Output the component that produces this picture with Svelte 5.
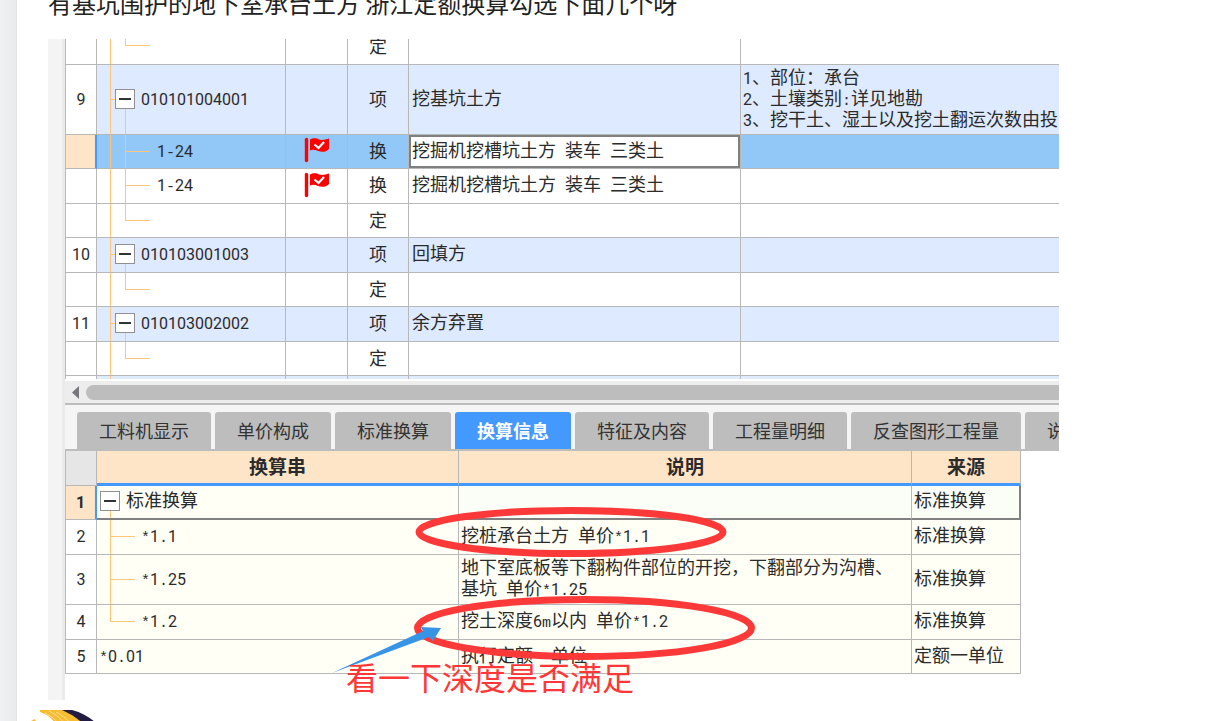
<script>
  const quotaRows = [
    { no: "", kind: "定", tree: "last" },
    {
      no: "9",
      code: "010101004001",
      kind: "项",
      name: "挖基坑土方",
      note: "1、部位：承台\n2、土壤类别:详见地勘\n3、挖干土、湿土以及挖土翻运次数由投",
      tree: "parent",
    },
    { no: "", code: "1-24", flag: true, kind: "换", name: "挖掘机挖槽坑土方 装车 三类土", tree: "child", selected: true },
    { no: "", code: "1-24", flag: true, kind: "换", name: "挖掘机挖槽坑土方 装车 三类土", tree: "child" },
    { no: "", kind: "定", tree: "last" },
    { no: "10", code: "010103001003", kind: "项", name: "回填方", tree: "parent" },
    { no: "", kind: "定", tree: "last" },
    { no: "11", code: "010103002002", kind: "项", name: "余方弃置", tree: "parent" },
    { no: "", kind: "定", tree: "last" },
    { no: "", kind: "", tree: "parent", cut: true },
  ];

  const tabs = ["工料机显示", "单价构成", "标准换算", "换算信息", "特征及内容", "工程量明细", "反查图形工程量", "说明信息"];
  let activeTab = $state("换算信息");

  const convertRows = [
    { no: "1", code: "标准换算", desc: "", source: "标准换算", tree: "parent", selected: true },
    { no: "2", code: "*1.1", desc: "挖桩承台土方 单价*1.1", source: "标准换算", tree: "child" },
    { no: "3", code: "*1.25", desc: "地下室底板等下翻构件部位的开挖，下翻部分为沟槽、\n基坑 单价*1.25", source: "标准换算", tree: "child" },
    { no: "4", code: "*1.2", desc: "挖土深度6m以内 单价*1.2", source: "标准换算", tree: "last" },
    { no: "5", code: "*0.01", desc: "执行定额一单位", source: "定额一单位", tree: "none" },
  ];

  // digits and other half-width characters get their own font
  const split = (text) => (text || "").match(/[0-9]+|[ -\/:-~]+|[^ -~]+/g) || [];
  const kindOf = (part) => (/^[0-9]/.test(part) ? "digit" : /^[ -~]/.test(part) ? "half" : "wide");
</script>

{#snippet grid(text)}{#each split(text) as part}<span class={kindOf(part)}>{part}</span>{/each}{/snippet}

{#snippet flagIcon()}
  <svg class="flag" width="26" height="26" viewBox="0 0 26 26" aria-hidden="true">
    <path d="M2.5 2.5V23.5" stroke="#f00" stroke-width="3.4" stroke-linecap="round" />
    <path d="M6 2.5C9 0.5 13 1 15 2.5C18 3.5 22 2.5 25 1.5V12C22 15 18 15.5 14 14C11 12.5 8 12.5 6 13.5Z" fill="#f00" />
    <path d="M10.5 7.5L14.5 11L20 5" fill="none" stroke="#fff" stroke-width="2.2" />
  </svg>
{/snippet}

<div class="page">
  <aside class="edge"></aside>
  <main>
    <h1>有基坑围护的地下室承台土方 浙江定额换算勾选下面几个呀</h1>

    <div class="shot">
      <div class="gutter"></div>
      <div class="panes">
        <div class="quota">
          <table>
            <colgroup>
              <col class="c-no" /><col class="c-code" /><col class="c-flag" /><col class="c-kind" /><col class="c-name" /><col />
            </colgroup>
            <tbody>
              {#each quotaRows as row}
                <tr class:item={row.tree === "parent"} class:selected={row.selected} class:tall={row.note}>
                  <td class="no">{@render grid(row.no)}</td>
                  <td class="code {row.tree}">
                    <i class="trunk"></i>
                    {#if !row.cut}
                      <i class="rail"></i><i class="twig"></i>
                    {/if}
                    {#if row.tree === "parent" && !row.cut}
                      <button class="fold" aria-label="折叠"></button>
                    {/if}
                    {@render grid(row.code)}
                  </td>
                  <td class="mid">{#if row.flag}{@render flagIcon()}{/if}</td>
                  <td class="mid">{row.kind}</td>
                  <td class="name">{@render grid(row.name)}</td>
                  <td class="note">{@render grid(row.note)}</td>
                </tr>
              {/each}
            </tbody>
          </table>
        </div>

        <div class="scroll">
          <button aria-label="向左滚动">
            <svg width="7" height="13" viewBox="0 0 7 13"><path d="M7 0V13L0 6.5Z" fill="#77777c" /></svg>
          </button>
          <div class="thumb"></div>
        </div>

        <div class="tabs" role="tablist">
          {#each tabs as tab}
            <button role="tab" aria-selected={activeTab === tab} class:active={activeTab === tab} onclick={() => (activeTab = tab)}>{tab}</button>
          {/each}
        </div>

        <table class="convert">
          <colgroup>
            <col class="c-no" /><col class="c-string" /><col class="c-desc" /><col class="c-source" />
          </colgroup>
          <thead>
            <tr><td class="corner"></td><th>换算串</th><th>说明</th><th>来源</th></tr>
          </thead>
          <tbody>
            {#each convertRows as row}
              <tr class:current={row.selected} class:double={row.desc.includes("\n")}>
                <td class="no">{@render grid(row.no)}</td>
                <td class="code {row.tree}">
                  {#if row.tree !== "none"}
                    <i class="rail"></i><i class="twig"></i>
                  {/if}
                  {#if row.tree === "parent"}
                    <button class="fold" aria-label="折叠"></button>
                  {/if}
                  {@render grid(row.code)}
                </td>
                <td class="desc">{@render grid(row.desc)}</td>
                <td class="desc">{@render grid(row.source)}</td>
              </tr>
            {/each}
          </tbody>
        </table>
      </div>

      <!-- hand-drawn marks over the tables -->
      <svg class="marks" width="1011" height="660" viewBox="48 39 1011 660" aria-hidden="true">
        <g fill="none" stroke="#fc3939" stroke-width="7">
          <ellipse cx="571" cy="532" rx="152" ry="21.5" />
          <ellipse cx="584.5" cy="628" rx="167" ry="28.5" />
        </g>
        <path d="M332 673L423 631L421 627L441 628L433 641L429 637Z" fill="#3895e6" />
      </svg>
      <p class="remark">看一下深度是否满足</p>
    </div>

    <svg class="avatar" width="80" height="80" viewBox="0 0 80 80" aria-hidden="true">
      <path d="M29 0H41C52 3 60 8 66 14L70 30H50Z" fill="#231c42" />
      <path d="M9 0H31C42 5 49 10 54 16H26C22 9 16 4 9 2Z" fill="#f8bd2e" />
      <path d="M0 11L4 9L7 16H-2Z" fill="#f8bd2e" />
      <path d="M18 1C25 5 31 9 35 16M25 2C32 6 38 10 41 16M14 3C21 7 26 10 28 16" fill="none" stroke="#fbe0a0" />
    </svg>
  </main>
</div>

<style>
  :global(body) {
    overflow: hidden;
    background: #fff;
  }

  .page {
    display: flex;
    height: 100vh;
    overflow: hidden;
    font-family: "Noto Sans CJK SC", sans-serif;
    color: #2b2b2b;
  }

  .edge {
    flex: 0 0 17px;
    box-sizing: border-box;
    border-right: 1px solid #e2e4e4;
    background: linear-gradient(to right, #eff1f3, #e9ebeb);
  }

  main {
    flex: 1;
    min-width: 0;
    padding-left: 31px;
    margin-top: -15px;
  }

  h1 {
    margin: 0 0 18px;
    font-size: 24px;
    font-weight: 400;
    line-height: 36px;
    white-space: nowrap;
    color: #222;
  }

  .shot {
    position: relative;
    display: flex;
    max-width: 1011px;
    overflow: hidden;
  }

  .gutter {
    flex: 0 0 17px;
    box-sizing: border-box;
    background: #f4f4f4;
    border-right: 3px solid #ebebeb;
  }

  .panes {
    flex: 1;
    min-width: 0;
    padding-bottom: 26px;
  }

  table {
    width: 100%;
    table-layout: fixed;
    border-spacing: 0;
    border-left: 1px solid #b8b8b8;
    font-size: 18px;
    line-height: 21px;
  }

  td,
  th {
    box-sizing: border-box;
    padding: 0 0 5px;
    height: 35px;
    border-right: 1px solid #b8b8b8;
    border-bottom: 1px solid #b8b8b8;
    white-space: pre;
    overflow: hidden;
  }

  .digit,
  .half {
    line-height: 0;
  }

  .digit {
    font-family: Roboto, sans-serif;
    font-size: 16px;
  }

  .half {
    font-family: "Liberation Mono", monospace;
    font-size: 15px;
  }

  .c-no { width: 31px; }
  .c-code { width: 189px; }
  .c-flag { width: 62px; }
  .c-kind { width: 61px; }
  .c-name { width: 332px; }
  .c-string { width: 362px; }
  .c-desc { width: 453px; }
  .c-source { width: 109px; }

  /* upper table */
  .quota {
    height: 340px;
    overflow: hidden;
  }

  .quota table {
    margin-top: -10px;
  }

  .quota tr:nth-child(odd) td {
    height: 34px;
  }

  .quota tr:first-child td {
    height: 36px;
  }

  .quota tr.tall td {
    height: 70px;
  }

  .item td {
    background: #deeaff;
  }

  .selected td {
    background: #92c8f7;
  }

  .item td.no {
    background: #fff;
  }

  .selected td.no,
  .current td.no {
    background: #ffe5c8;
    border-right: 2px solid #4499ff;
  }

  .selected td.name {
    background: #fff;
    box-shadow: inset 0 0 0 2px #808080;
  }

  .no,
  .mid {
    text-align: center;
  }

  .mid {
    padding-bottom: 3px;
  }

  .name,
  .note,
  .desc {
    padding-left: 3px;
  }

  .note {
    padding-left: 2px;
    border-right: 0;
  }

  .flag {
    display: block;
    margin: 0 auto;
  }

  /* tree column */
  .code {
    position: relative;
    padding-left: 44px;
    white-space: nowrap;
  }

  .quota .child {
    padding-left: 60px;
  }

  .code i {
    position: absolute;
    background: #ffc67a;
  }

  .code .trunk {
    left: 13px;
    top: 0;
    bottom: -1px;
    width: 1px;
  }

  .code .rail {
    left: 28px;
    top: 0;
    bottom: -1px;
    width: 1px;
  }

  .code .twig {
    left: 28px;
    top: 16px;
    width: 25px;
    height: 1px;
  }

  .tall .code .twig {
    top: 34px;
  }

  .double .code .twig {
    top: 24px;
  }

  .code.last .rail {
    height: 16px;
    bottom: auto;
  }

  .code.parent .rail {
    top: 50%;
  }

  .code.parent .twig {
    left: 13px;
    width: 6px;
  }

  .fold {
    position: absolute;
    left: 18px;
    top: 50%;
    width: 20px;
    height: 20px;
    margin-top: -11px;
    padding: 0;
    border: 1px solid #8f8f94;
    background: linear-gradient(#333, #333) center / 12px 2px no-repeat #fff;
  }

  /* scrollbar */
  .scroll {
    display: flex;
    align-items: center;
    gap: 7px;
    box-sizing: border-box;
    height: 26px;
    padding-left: 7px;
    border-top: 2px solid #fff;
    border-bottom: 2px solid #bdbdbd;
    background: #ededed;
  }

  .scroll button {
    display: flex;
    padding: 0;
    border: 0;
    background: none;
  }

  .thumb {
    flex: 1;
    height: 15px;
    border-radius: 8px 0 0 8px;
    background: #bdbdbd;
  }

  /* tabs */
  .tabs {
    display: flex;
    gap: 4px;
    padding: 7px 0 0 12px;
    border-bottom: 2px solid #bdbdbd;
    background: #f5f5f5;
    overflow: hidden;
  }

  .tabs button {
    flex: none;
    height: 37px;
    padding: 0 22px;
    border: 0;
    border-radius: 3px 3px 0 0;
    background: #bdbdbd;
    color: #333;
    font-family: inherit;
    font-size: 18px;
    line-height: 37px;
  }

  .tabs button.active {
    background: #4499ff;
    color: #fff;
    font-weight: 700;
  }

  /* lower table */
  .convert {
    width: 956px;
  }

  .convert td {
    background: #fffff5;
  }

  .convert td.corner {
    background: #e6e6e6;
  }

  .convert th {
    padding-bottom: 3px;
    background: #ffe5c8;
    border-bottom: 3px solid #4499ff;
    font-size: 19px;
    font-weight: 700;
  }

  .convert td.no {
    background: #fff;
  }

  .convert tr:nth-child(odd) td {
    height: 34px;
  }

  .convert tr.double td {
    height: 50px;
  }

  .convert .current td.no {
    background: #ffe5c8;
    font-weight: 700;
  }

  .convert .current td:not(.no) {
    border-bottom: 2px solid #808080;
  }

  .convert .current td.desc {
    background: #fbfdf7;
  }

  .convert .current td:last-child {
    border-right: 2px solid #808080;
  }

  .convert .desc {
    padding-left: 2px;
  }

  .convert .parent {
    padding-left: 29px;
  }

  .convert .none {
    padding-left: 2px;
  }

  .convert .code .rail,
  .convert .code .twig {
    left: 13px;
  }

  .convert .code.parent .twig {
    width: 0;
  }

  .convert .fold {
    left: 3px;
  }

  .marks {
    position: absolute;
    left: 0;
    top: 0;
  }

  .remark {
    position: absolute;
    left: 298px;
    top: 617px;
    margin: 0;
    font-size: 32px;
    line-height: 40px;
    white-space: nowrap;
    color: #ff3737;
  }

  .avatar {
    display: block;
    margin: 10px 0 0 -17px;
  }
</style>
